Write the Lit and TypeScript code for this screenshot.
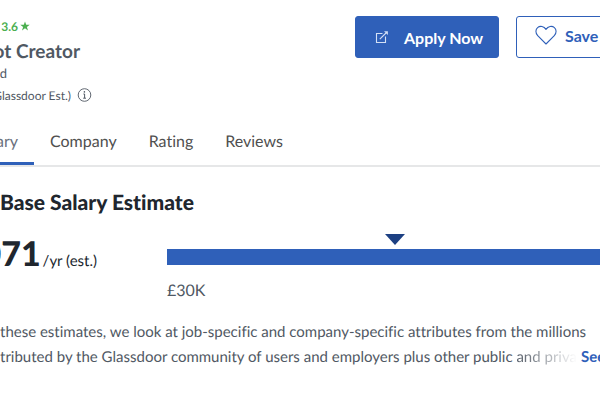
import { LitElement, html, css } from "lit";
import { customElement } from "lit/decorators.js";

@customElement("app-root")
export class AppRoot extends LitElement {
  static styles = css`
    :host {
      display: block;
      overflow: hidden;
      min-height: 100vh;
      background: #fff;
      color: #505863;
      font-family: Lato, "Open Sans", sans-serif;
      font-size: 16px;
      font-variant-ligatures: no-common-ligatures;
      text-rendering: geometricPrecision;
    }
    * { box-sizing: border-box; }
    h1, h2, p { margin: 0; }
    svg { display: block; flex: none; }
    .header {
      display: flex;
      justify-content: space-between;
      padding-top: 16px;
    }
    .job { width: 92px; }
    .line {
      display: flex;
      justify-content: flex-end;
      align-items: center;
      white-space: nowrap;
    }
    .rating {
      width: 30px;
      gap: 2px;
      height: 20px;
      color: #4caf50;
      font-size: 12px;
      font-weight: 700;
    }
    .title {
      width: 80px;
      height: 30px;
      font-size: 19px;
      font-weight: 700;
    }
    .place { width: 7px; height: 14px; font-size: 13px; }
    .pay { gap: 6px; height: 30px; font-size: 12px; }
    .info {
      padding: 0;
      border: 0;
      background: none;
      color: inherit;
    }
    .actions {
      display: flex;
      gap: 17px;
      flex: none;
      margin-right: -60px;
    }
    .btn {
      display: flex;
      align-items: center;
      height: 42px;
      padding: 0 18px;
      border: 1px solid #2f60b9;
      border-radius: 3px;
      font-family: inherit;
      font-size: 16px;
      font-weight: 700;
      white-space: nowrap;
    }
    .apply { width: 144px; gap: 14px; background: #2f60b9; color: #fff; }
    .save { width: 144px; gap: 8px; padding-bottom: 4px; background: #fff; color: #2f60b9; }
    .tabs {
      display: flex;
      margin-top: 8px;
      border-bottom: 2px solid #e6e7e8;
    }
    .tab {
      height: 47px;
      padding: 0 16px;
      border-bottom: 3px solid transparent;
      color: #505050;
      line-height: 48px;
      text-decoration: none;
    }
    .active {
      display: flex;
      justify-content: flex-end;
      width: 34px;
      border-color: #2f60b9;
      color: #6a717c;
    }
    .heading {
      margin-top: 20px;
      color: #20262e;
      font-size: 21px;
      line-height: 32px;
      font-weight: 900;
    }
    .estimate { display: flex; margin-top: 12px; }
    .amount {
      display: flex;
      justify-content: flex-end;
      align-items: baseline;
      flex: none;
      gap: 2px;
      width: 97px;
      height: 44px;
      color: #20262e;
      white-space: nowrap;
    }
    .number { font-size: 34px; line-height: 46px; font-weight: 900; }
    .unit { font-size: 15px; }
    .range { flex: 1; margin-left: 70px; }
    .marker { margin: 3px 0 4px 218px; }
    .bar { height: 16px; background: #2f60b9; }
    .low { margin-top: 14px; line-height: 24px; }
    .about {
      margin-top: 17px;
      font-size: 15px;
      line-height: 25px;
      white-space: nowrap;
    }
    .row { display: flex; }
    .fade {
      color: transparent;
      background: linear-gradient(90deg, #505863, #fff);
      background-clip: text;
      -webkit-background-clip: text;
    }
    .more {
      margin-left: 4px;
      color: #2f60b9;
      font-weight: 700;
      text-decoration: none;
    }
  `;

  render() {
    return html`
      <header class="header">
        <div class="job">
          <div class="line rating">
            <span>3.6</span>
            <svg width="10" height="10" viewBox="0 0 10 10" fill="currentColor">
              <path d="M5 .4 6.2 3.8H9.7L6.9 5.9 8 9.4 5 7.3 2 9.4 3.1 5.9.3 3.8H3.8z" />
            </svg>
          </div>
          <h1 class="line title">ot Creator</h1>
          <div class="line place">ed</div>
          <div class="line pay">
            <span>(Glassdoor Est.)</span>
            <button class="info" aria-label="About this estimate">
              <svg width="15" height="14" viewBox="0 0 15 14" fill="none" stroke="currentColor">
                <circle cx="7.5" cy="7" r="6.3" stroke-width=".9" />
                <path d="M6.4 6H7.6V10M6.2 10.2H9" stroke-width="1" />
                <circle cx="7.4" cy="3.9" r=".8" fill="currentColor" stroke="none" />
              </svg>
            </button>
          </div>
        </div>
        <div class="actions">
          <button class="btn apply">
            <svg width="16" height="16" viewBox="0 0 16 16" fill="none" stroke="#d4e0f5" stroke-width="1.1">
              <path d="M8.5 4.5H2.5V13.5H11.5V7.5M5.8 10.2 12.5 3.5" />
              <path d="M10 2.2H13.9V6.1z" fill="#d4e0f5" stroke="none" />
            </svg>
            <span>Apply Now</span>
          </button>
          <button class="btn save">
            <svg width="22" height="20" viewBox="0 0 22 20" fill="none" stroke="currentColor" stroke-width="1.1" stroke-linejoin="round">
              <path d="M11 19 2.7 10.7C.2 8.1.5 4.4 2.6 2.6 5 .6 9 1.1 11 4.4 13 1.1 17 .6 19.4 2.6 21.5 4.4 21.8 8.1 19.3 10.7z" />
            </svg>
            <span>Save</span>
          </button>
        </div>
      </header>
      <nav class="tabs">
        <a class="tab active" href="#salary">ary</a>
        <a class="tab" href="#company">Company</a>
        <a class="tab" href="#rating">Rating</a>
        <a class="tab" href="#reviews">Reviews</a>
      </nav>
      <main>
        <h2 class="heading">Base Salary Estimate</h2>
        <div class="estimate">
          <div class="amount">
            <span class="number">071</span>
            <span class="unit">/yr (est.)</span>
          </div>
          <div class="range">
            <svg class="marker" width="20" height="11" viewBox="0 0 20 11" fill="#1d4083">
              <path d="M0 0H20L10 11z" />
            </svg>
            <div class="bar"></div>
            <div class="low">£30K</div>
          </div>
        </div>
        <p class="about">
          <span class="row">these estimates, we look at job-specific and company-specific attributes from the millions</span>
          <span class="row"><span>tributed by the Glassdoor community of users and employers plus other public&nbsp;</span><span class="fade">and priva</span><a class="more" href="#more">See More</a></span>
        </p>
      </main>
    `;
  }
}
